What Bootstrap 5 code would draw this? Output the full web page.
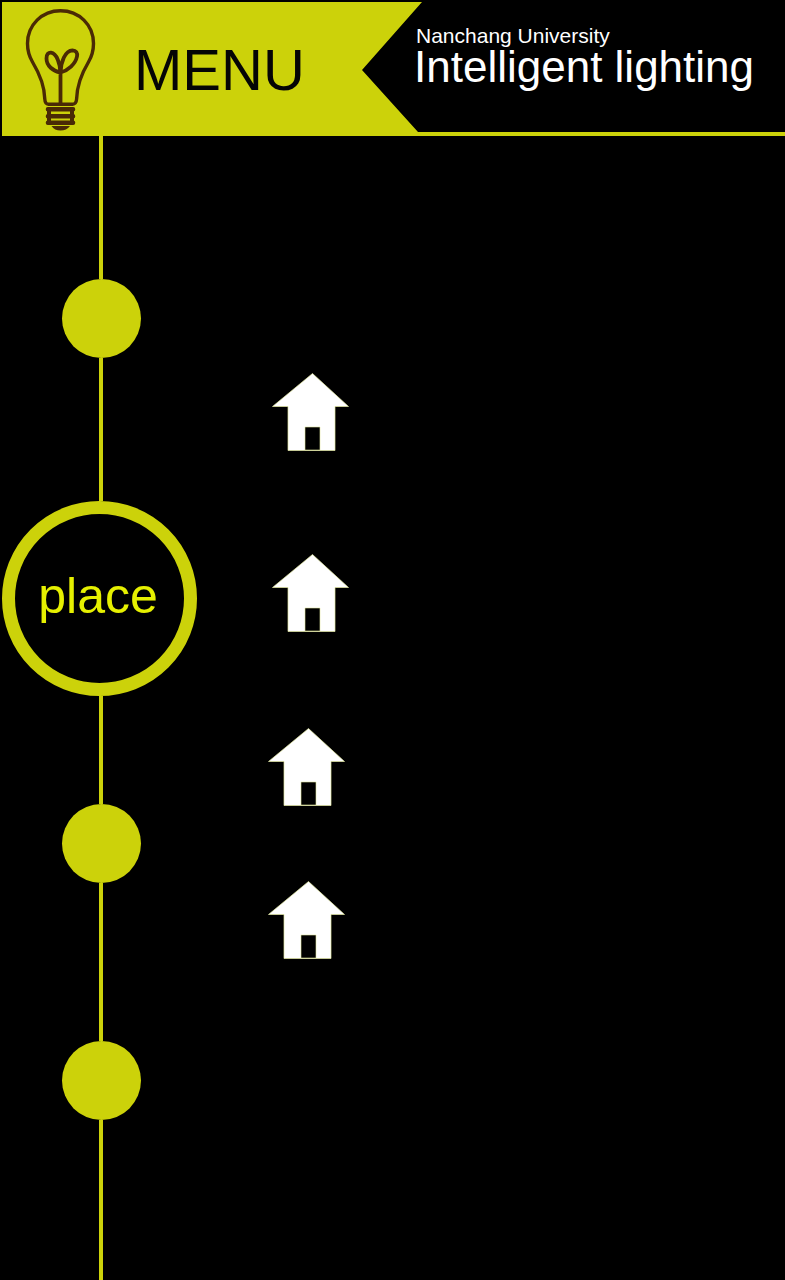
<!DOCTYPE html>
<html lang="en">
<head>
<meta charset="utf-8">
<meta name="viewport" content="width=device-width, initial-scale=1">
<title>Intelligent lighting</title>
<link rel="stylesheet" href="https://cdn.jsdelivr.net/npm/bootstrap@5.3.0/dist/css/bootstrap.min.css">
<style>
  :root { --lime: #ccd20a; }
  body { background: #000; color: #fff; font-family: "Liberation Sans", Arial, sans-serif; }
  .topbar { margin: 2px 0 0 2px; border-bottom: 4px solid var(--lime); min-height: 134px; }
  .menu-tab { width: 420px; background: var(--lime); clip-path: polygon(0 0, 100% 0, 360px 68px, 416px 100%, 0 100%); }
  .menu-tab svg { width: 72px; height: 126px; margin-left: 20px; margin-top: 4px; }
  .menu-title { font-size: 58px; line-height: 64px; color: #050505; margin: 36px 0 0 40px; padding: 0; border: 0; background: none; }
  .titles { padding-top: 23px; margin-left: -6px; }
  .school { font-size: 21px; line-height: 22px; }
  .product { font-size: 44px; line-height: 40px; margin: 0 0 0 -2px; }
  .rail { width: 198px; margin-left: 2px; }
  .wire { width: 4px; background: var(--lime); }
  .wire-lg { height: 143px; }
  .wire-sm { height: 108px; }
  .wire-xl { height: 158px; }
  .dot { width: 79px; height: 79px; background: var(--lime); border: 0; padding: 0; }
  .ring { width: 195px; height: 195px; border: 13px solid var(--lime); background: #000; color: #e6f000; font-size: 50px; line-height: 56px; padding: 0 3px 6px 0; }
  .houses { padding: 237px 0 0 68px; }
  .houses svg { width: 77px; height: 78px; }
  .houses a { margin-bottom: 75px; }
  .houses .upper { margin-left: 4px; margin-bottom: 103px; }
  .houses .upper + .upper { margin-bottom: 96px; }
</style>
</head>
<body class="min-vh-100 d-flex flex-column overflow-x-hidden">
<svg class="d-none" aria-hidden="true">
  <symbol id="house" viewBox="0 0 77 78">
    <path d="M40.500 .5 76.500 33.500H63V77.500H16V33.500H.5Z" fill="#fff" stroke="#e3e8a0" stroke-width=".7"/>
    <path d="M33 54H48V77H33Z" fill="#000" stroke="#e3e8a0" stroke-width=".6"/>
  </symbol>
</svg>
<header class="topbar d-flex">
  <div class="menu-tab d-flex align-items-start flex-shrink-0">
    <svg class="flex-shrink-0" viewBox="22 6 72 126" overflow="visible" fill="none" stroke="#4a2a05" stroke-width="3.400" stroke-linecap="round" stroke-linejoin="round" aria-hidden="true">
      <path d="M48.500 104.300Q45 104 44.800 99C44.500 84 38.500 72 32.500 62C29 56 27.500 50 27.500 43.500C27.500 25 42 10.700 60.500 10.700S93.500 25 93.500 43.500C93.500 50 92 56 88.500 62C82.500 72 77 84 76.600 99Q76.300 104 72.500 104.300Z"/>
      <path stroke-width="3.800" d="M60.500 103V72.500C53 71 46.500 66 46.500 58.500C46.500 54 48.500 52.500 51 52.700C57 53.500 60 64 60.500 72.500C61 62 65 50.500 72.500 50.300C76 50.300 77.800 53 77 56.500C75.500 64 68 70.500 60.500 72.500"/>
      <path d="M48 109.200H73M48 116.200H73M48 122.800H73" stroke-width="4.600"/>
      <path d="M49 109V123M72 109V123" stroke-width="4"/>
      <path d="M51.500 126H70Q66.500 130.600 60.500 130.600T51.500 126Z" fill="#4a2a05" stroke="none"/>
    </svg>
    <button type="button" class="menu-title">MENU</button>
  </div>
  <div class="titles text-nowrap">
    <div class="school">Nanchang University</div>
    <h1 class="product fw-normal">Intelligent lighting</h1>
  </div>
</header>
<main class="d-flex flex-grow-1">
  <nav class="rail d-flex flex-column align-items-center flex-shrink-0" aria-label="Menu">
    <span class="wire wire-lg"></span>
    <button type="button" class="dot rounded-circle" aria-label="First section"></button>
    <span class="wire wire-lg"></span>
    <button type="button" class="ring rounded-circle align-self-start">place</button>
    <span class="wire wire-sm"></span>
    <button type="button" class="dot rounded-circle" aria-label="Third section"></button>
    <span class="wire wire-xl"></span>
    <button type="button" class="dot rounded-circle" aria-label="Fourth section"></button>
    <span class="wire flex-grow-1"></span>
  </nav>
  <div class="houses d-flex flex-column align-items-start">
    <a class="d-flex upper" href="#place-1" aria-label="Place 1"><svg><use href="#house"/></svg></a>
    <a class="d-flex upper" href="#place-2" aria-label="Place 2"><svg><use href="#house"/></svg></a>
    <a class="d-flex" href="#place-3" aria-label="Place 3"><svg><use href="#house"/></svg></a>
    <a class="d-flex" href="#place-4" aria-label="Place 4"><svg><use href="#house"/></svg></a>
  </div>
</main>
<script src="https://cdn.jsdelivr.net/npm/bootstrap@5.3.0/dist/js/bootstrap.bundle.min.js"></script>
</body>
</html>
